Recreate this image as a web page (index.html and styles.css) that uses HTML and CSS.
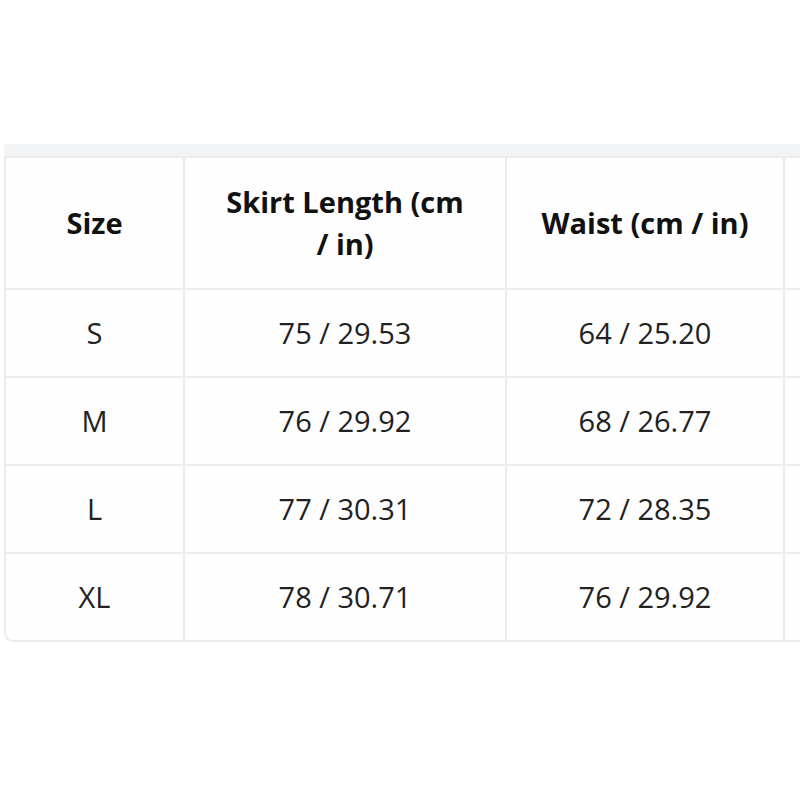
FILE: index.html
```html
<!DOCTYPE html>
<html lang="en">
<head>
<meta charset="utf-8">
<title>Size Chart</title>
<link rel="stylesheet" href="styles.css">
</head>
<body>
  <div class="frame">
    <div class="band"></div>
    <div class="table-wrap">
      <table class="size-table">
        <colgroup>
          <col class="c1"><col class="c2"><col class="c3"><col class="c4">
        </colgroup>
        <thead>
          <tr>
            <th>Size</th>
            <th>Skirt Length (cm / in)</th>
            <th>Waist (cm / in)</th>
            <th class="stub"></th>
          </tr>
        </thead>
        <tbody>
          <tr><td>S</td><td>75 / 29.53</td><td>64 / 25.20</td><td class="stub"></td></tr>
          <tr><td>M</td><td>76 / 29.92</td><td>68 / 26.77</td><td class="stub"></td></tr>
          <tr><td>L</td><td>77 / 30.31</td><td>72 / 28.35</td><td class="stub"></td></tr>
          <tr><td>XL</td><td>78 / 30.71</td><td>76 / 29.92</td><td class="stub"></td></tr>
        </tbody>
      </table>
    </div>
  </div>
</body>
</html>
```

FILE: styles.css
```css
html, body {
  margin: 0;
  padding: 0;
  background: #ffffff;
  overflow: hidden;
}

body {
  font-family: "Open Sans", "Noto Sans", sans-serif;
  color: #222222;
}

.frame {
  margin: 144px 0 0 4px;
}

.band {
  height: 12px;
  background: #f3f4f5;
}

.table-wrap {
  border: 2px solid #ececec;
  border-right: none;
  border-radius: 0 0 0 9px;
  overflow: hidden;
  background: #fefefe;
}

.size-table {
  border-collapse: collapse;
  table-layout: fixed;
  width: 100%;
}

.c1 { width: 178px; }
.c2 { width: 322px; }
.c3 { width: 278px; }
.c4 { width: auto; }

.size-table th,
.size-table td {
  text-align: center;
  line-height: 42px;
  font-size: 29px;
  border-right: 2px solid #ececec;
  border-bottom: 2px solid #ececec;
}

.size-table th {
  font-weight: 700;
  color: #111111;
  padding: 23px 34px;
}

.size-table td {
  font-weight: 400;
  color: #222222;
  padding: 22px 12px;
}

.size-table .stub {
  padding-left: 0;
  padding-right: 0;
  border-right: none;
}

.size-table tbody tr:last-child td {
  border-bottom: none;
}
```
